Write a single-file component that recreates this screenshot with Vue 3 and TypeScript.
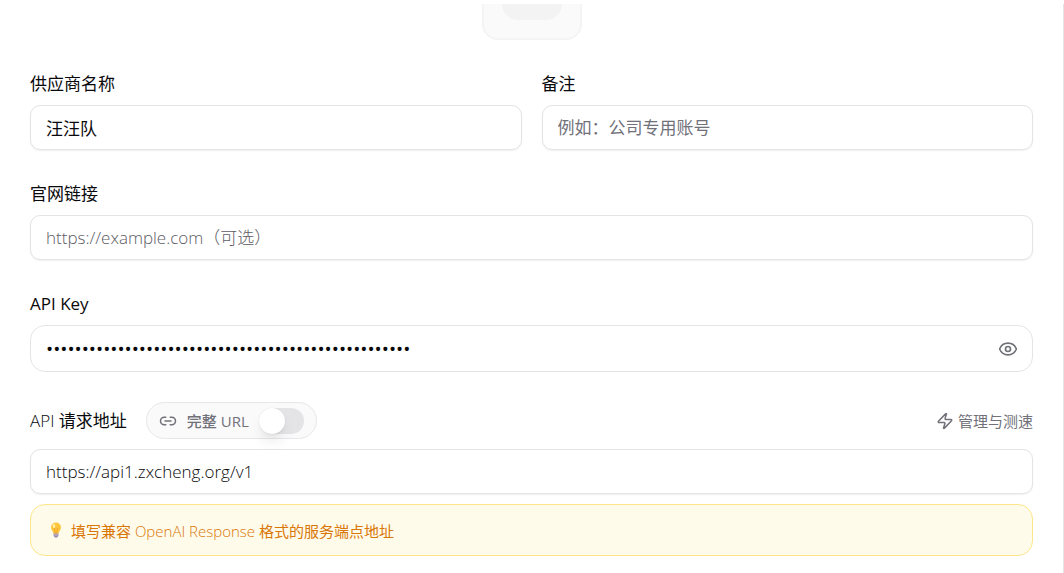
<script setup lang="ts">
import { ref } from 'vue'

const name = ref('汪汪队')
const note = ref('')
const website = ref('')
const apiKey = ref('k'.repeat(51))
const showKey = ref(false)
const endpoint = ref('https://api1.zxcheng.org/v1')
const fullUrl = ref(false)
</script>

<template>
  <main class="panel">
    <div class="avatar"><div class="avatar-inner"></div></div>

    <form class="form" @submit.prevent>
      <div class="columns">
        <div class="field">
          <label class="label" for="name">供应商名称</label>
          <input id="name" v-model="name" class="input" type="text" />
        </div>
        <div class="field">
          <label class="label" for="note">备注</label>
          <input id="note" v-model="note" class="input" type="text" placeholder="例如：公司专用账号" />
        </div>
      </div>

      <div class="field">
        <label class="label" for="website">官网链接</label>
        <input id="website" v-model="website" class="input url" type="text" placeholder="https://example.com（可选）" />
      </div>

      <div class="field">
        <label class="label medium" for="key">API Key</label>
        <div class="key-box">
          <input id="key" v-model="apiKey" class="key-input" :type="showKey ? 'text' : 'password'" autocomplete="off" />
          <button class="icon-button" type="button" aria-label="显示 API Key" @click="showKey = !showKey">
            <svg width="20" height="20" viewBox="0 0 24 24" fill="none" stroke="currentColor" stroke-width="2" stroke-linecap="round" stroke-linejoin="round">
              <path d="M2.062 12.348a1 1 0 0 1 0-.696 10.75 10.75 0 0 1 19.876 0 1 1 0 0 1 0 .696 10.75 10.75 0 0 1-19.876 0" />
              <circle cx="12" cy="12" r="3" />
            </svg>
          </button>
        </div>
      </div>

      <div class="field endpoint">
        <div class="endpoint-head">
          <label class="label" for="endpoint"><span class="light">API</span> 请求地址</label>
          <label class="pill">
            <svg width="18" height="18" viewBox="0 0 24 24" fill="none" stroke="currentColor" stroke-width="2" stroke-linecap="round" stroke-linejoin="round">
              <path d="M9 17H7A5 5 0 0 1 7 7h2" />
              <path d="M15 7h2a5 5 0 1 1 0 10h-2" />
              <path d="M8 12h8" />
            </svg>
            <span>完整 URL</span>
            <input v-model="fullUrl" class="switch" type="checkbox" role="switch" />
          </label>
          <button class="speed" type="button">
            <svg width="18" height="18" viewBox="0 0 24 24" fill="none" stroke="currentColor" stroke-width="2" stroke-linecap="round" stroke-linejoin="round">
              <path d="M4 14a1 1 0 0 1-.78-1.63l9.9-10.2a.5.5 0 0 1 .86.46l-1.92 6.02A1 1 0 0 0 13 10h7a1 1 0 0 1 .78 1.63l-9.9 10.2a.5.5 0 0 1-.86-.46l1.92-6.02A1 1 0 0 0 11 14z" />
            </svg>
            <span>管理与测速</span>
          </button>
        </div>
        <input id="endpoint" v-model="endpoint" class="input url" type="text" />
        <p class="hint">
          <svg width="12" height="16" viewBox="0 0 12 16">
            <path d="M6 .5a5 5 0 0 0-5 5c0 2 1.3 3 2 4.500l.6 2h4.800l.6-2c.7-1.500 2-2.500 2-4.500a5 5 0 0 0-5-5z" fill="#fcc53c" />
            <path d="M4.500 6l.8 5.500M7.500 6l-.8 5.500" stroke="#f09a25" stroke-width=".8" />
            <ellipse cx="4" cy="4" rx="1.300" ry="2" fill="#fff0a5" />
            <path d="M3.600 11.500h4.800v2L7.300 15.500H4.700L3.600 13.500z" fill="#9a8bad" />
            <path d="M3.600 12.800h4.800" stroke="#d5cede" stroke-width=".7" />
          </svg>
          <span>填写兼容 <span class="light">OpenAI Response</span> 格式的服务端点地址</span>
        </p>
      </div>
    </form>
  </main>
</template>

<style>
body {
  margin: 0;
  background: #fff;
}
</style>

<style scoped>
.panel {
  margin-top: 4px;
  padding: 0 30px 17px;
  border-right: 1px solid #e4e4e7;
  color: #09090b;
  font-family: "Open Sans", "Noto Sans CJK SC", sans-serif;
  font-size: 17px;
  font-weight: 400;
}

.avatar {
  box-sizing: border-box;
  width: 100px;
  height: 36px;
  margin: 0 auto 33px;
  padding: 0 18px;
  border: 2px solid #f4f4f5;
  border-top: 0;
  border-radius: 0 0 16px 16px;
  background: #fafafa;
}

.avatar-inner {
  height: 16px;
  border-radius: 0 0 16px 16px;
  background: #f3f3f4;
}

.form {
  display: flex;
  flex-direction: column;
  gap: 33px;
}

.columns {
  display: grid;
  grid-template-columns: 1fr 1fr;
  gap: 20px;
}

.field {
  display: flex;
  flex-direction: column;
  gap: 10px;
  min-width: 0;
}

.label {
  line-height: 22px;
}

.label.medium {
  font-weight: 500;
}

.light {
  font-weight: 300;
}

.input {
  box-sizing: border-box;
  width: 100%;
  height: 45px;
  padding: 0 15px;
  border: 1px solid #e4e4e7;
  border-radius: 10px;
  background: #fff;
  box-shadow: 0 1px 2px rgb(0 0 0 / 6%);
  color: inherit;
  font: inherit;
  outline: none;
}

.input.url {
  font-weight: 300;
}

.input::placeholder {
  color: #71717a;
  opacity: 1;
}

.input.url::placeholder {
  color: #5b5b64;
}

.key-box {
  display: flex;
  align-items: center;
  box-sizing: border-box;
  height: 47px;
  padding: 0 14px 0 15px;
  border: 1px solid #e4e4e7;
  border-radius: 15px;
}

.key-input {
  flex: 1;
  min-width: 0;
  padding: 0;
  border: 0;
  background: none;
  color: inherit;
  font: inherit;
  font-size: 19px;
  outline: none;
}

.icon-button,
.speed {
  display: flex;
  align-items: center;
  padding: 0;
  border: 0;
  background: none;
  color: #71717a;
  cursor: pointer;
}

.endpoint {
  margin-top: -3px;
}

.endpoint-head {
  display: flex;
  align-items: center;
}

.pill {
  display: flex;
  align-items: center;
  gap: 10px;
  box-sizing: border-box;
  height: 37px;
  margin-left: 19px;
  padding: 0 12px;
  border: 1px solid #e7e7ea;
  border-radius: 19px;
  background: #fafafa;
  color: #71717a;
  font-size: 15px;
  font-weight: 500;
}

.switch {
  appearance: none;
  width: 45px;
  height: 26px;
  margin: 0;
  border-radius: 13px;
  background: #e4e4e7;
}

.switch::before {
  content: "";
  display: block;
  width: 26px;
  height: 26px;
  border-radius: 50%;
  background: #fff;
  box-shadow: 0 10px 15px -3px rgb(0 0 0 / 10%), 0 4px 6px -4px rgb(0 0 0 / 10%), 0 0 2px rgb(0 0 0 / 8%);
}

.switch:checked::before {
  margin-left: auto;
}

.speed {
  gap: 4px;
  margin-left: auto;
  font: inherit;
  font-size: 15px;
}

.hint {
  display: flex;
  align-items: center;
  gap: 9px;
  box-sizing: border-box;
  min-height: 52px;
  margin: 0;
  padding: 0 19px;
  border: 1px solid #fde68a;
  border-radius: 15px;
  background: #fffbeb;
  color: #d97706;
  font-size: 15px;
}
</style>
